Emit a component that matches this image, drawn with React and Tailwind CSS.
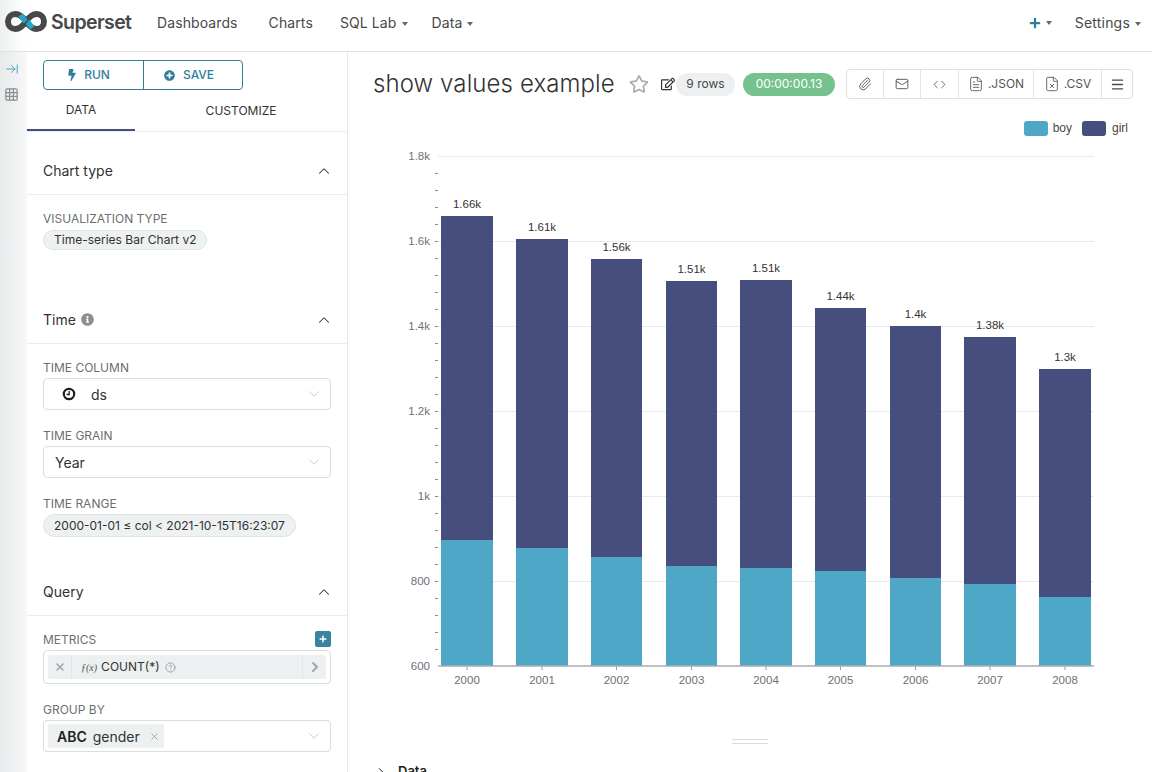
import { ArrowRightToLine, ChevronDown, ChevronRight, ChevronUp, Code, FileText, FileX, Grid3x3, Mail, Menu, Paperclip, X, CircleHelp } from 'lucide-react';
import { FaBolt, FaInfoCircle, FaPlusCircle, FaPlus, FaRegEdit, FaRegStar } from 'react-icons/fa';

const bars = [
  { year: 2000, x: 441, w: 52, top: 216, mid: 540, label: '1.66k' },
  { year: 2001, x: 516, w: 52, top: 239, mid: 548, label: '1.61k' },
  { year: 2002, x: 591, w: 51, top: 259, mid: 557, label: '1.56k' },
  { year: 2003, x: 666, w: 51, top: 281, mid: 566, label: '1.51k' },
  { year: 2004, x: 740, w: 52, top: 280, mid: 568, label: '1.51k' },
  { year: 2005, x: 815, w: 51, top: 308, mid: 571, label: '1.44k' },
  { year: 2006, x: 890, w: 51, top: 326, mid: 578, label: '1.4k' },
  { year: 2007, x: 964, w: 52, top: 337, mid: 584, label: '1.38k' },
  { year: 2008, x: 1039, w: 52, top: 369, mid: 597, label: '1.3k' },
];

const yTicks = [
  { y: 156, label: '1.8k' },
  { y: 241, label: '1.6k' },
  { y: 326, label: '1.4k' },
  { y: 411, label: '1.2k' },
  { y: 496, label: '1k' },
  { y: 581, label: '800' },
];

const minorTicks = [];
for (let y = 173; y < 666; y += 17) minorTicks.push(y);

function Caret() {
  return <span className="ml-[5px] inline-block border-x-[3px] border-t-[4px] border-x-transparent border-t-[#666] align-middle" />;
}

function Logo() {
  return (
    <svg width="42" height="21" viewBox="0 0 42 21" fill="none" className="-mt-[3px]">
      <path d="M21 10.5 C17.5 5.5 14.8 3 10.5 3 C6.3 3 3 6.3 3 10.5 C3 14.7 6.3 18 10.5 18 C14.8 18 17.5 15.5 21 10.5 C24.5 5.5 27.2 3 31.5 3 C35.7 3 39 6.3 39 10.5 C39 14.7 35.7 18 31.5 18 C27.2 18 24.5 15.5 21 10.5 Z" stroke="#484848" strokeWidth="6" />
      <path d="M17.6 2.8 L22.6 8.4 L19 12.6 L13.2 5.4 Z" fill="#20a7c9" />
      <path d="M24.4 8.6 L29.4 15.4 L25 18.4 L20.8 13 Z" fill="#20a7c9" />
    </svg>
  );
}

function SectionHeader({ title, info, className }) {
  return (
    <div className={`flex h-[47px] items-center justify-between border-b border-[#e8eded] pl-4 pr-[14px] ${className}`}>
      <div className="flex items-center gap-[5px] pb-[2px] text-[14px] text-[#323232]">
        {title}
        {info && <FaInfoCircle className="h-[13px] w-[13px] text-[#8a8f8f]" />}
      </div>
      <ChevronUp className="h-[18px] w-[18px] text-[#323232]" strokeWidth={1.4} />
    </div>
  );
}

function FieldLabel({ children, className = '' }) {
  return <div className={`h-[14px] text-[12px] leading-[16px] text-[#6a6f6f] ${className}`}>{children}</div>;
}

function SelectBox({ children, className = '' }) {
  return (
    <div className={`flex h-8 items-center justify-between rounded-[4px] border border-[#d9dddd] pr-[7px] text-[14px] text-[#323232] ${className}`}>
      {children}
      <ChevronDown className="h-[18px] w-[18px] text-[#bfc4c4]" strokeWidth={1.2} />
    </div>
  );
}

function Pill({ children, className = '' }) {
  return (
    <div className={`inline-flex items-center rounded-full border border-[#dfe3e3] bg-[#eef1f1] px-[10px] text-[12px] text-[#323232] ${className}`}>
      {children}
    </div>
  );
}

function ClockIcon() {
  return (
    <svg width="14" height="14" viewBox="0 0 14 14" fill="none">
      <circle cx="7" cy="7" r="5.2" stroke="#1f1f1f" strokeWidth="2.2" />
      <path d="M7.2 4 V7.5 H4.6" stroke="#1f1f1f" strokeWidth="1.3" />
    </svg>
  );
}

function ControlPanel() {
  return (
    <aside className="w-[321px] shrink-0 border-r border-[#e4e8e8] bg-white">
      <div className="px-4 pt-2">
        <div className="flex h-[30px] w-[200px] rounded-[4px] border border-[#2f7f9b] text-[12px] font-medium text-[#2f7f9b]">
          <div className="flex w-[100px] items-center justify-center gap-[7px] border-r border-[#2f7f9b] pr-[10px]">
            <FaBolt className="h-3 w-[10px]" />
            RUN
          </div>
          <div className="flex flex-1 items-center justify-center gap-2 pr-2">
            <FaPlusCircle className="h-[11px] w-[11px]" />
            SAVE
          </div>
        </div>
      </div>

      <div className="flex h-[42px] border-b border-[#e8eded] text-[12px] text-[#323232]">
        <div className="flex w-[108px] items-center justify-center border-b-2 border-[#454e7c] pt-[1px]">DATA</div>
        <div className="flex w-[212px] items-center justify-center pt-[1px]">CUSTOMIZE</div>
      </div>

      <SectionHeader title="Chart type" className="mt-4" />
      <div className="px-4 pt-4">
        <FieldLabel>VISUALIZATION TYPE</FieldLabel>
        <Pill className="mt-[5px] h-5">Time-series Bar Chart v2</Pill>
      </div>

      <SectionHeader title="Time" info className="mt-[47px]" />
      <div className="px-4 pt-4">
        <FieldLabel>TIME COLUMN</FieldLabel>
        <SelectBox className="mt-1">
          <div className="flex items-center gap-[15px] pl-[18px]">
            <ClockIcon />
            <span>ds</span>
          </div>
        </SelectBox>
        <FieldLabel className="mt-[18px]">TIME GRAIN</FieldLabel>
        <SelectBox className="mt-1">
          <span className="pl-[11px]">Year</span>
        </SelectBox>
        <FieldLabel className="mt-[18px]">TIME RANGE</FieldLabel>
        <Pill className="mt-1 h-[23px]">2000-01-01 ≤ col &lt; 2021-10-15T16:23:07</Pill>
      </div>

      <SectionHeader title="Query" className="mt-8" />
      <div className="px-4 pt-4">
        <div className="-mt-px flex items-center justify-between">
          <FieldLabel>METRICS</FieldLabel>
          <div className="flex h-4 w-4 items-center justify-center rounded-[2px] bg-[#3b84a0] text-white">
            <FaPlus className="h-2 w-2" />
          </div>
        </div>
        <div className="mt-[3px] flex h-[34px] items-center rounded-[4px] border border-[#d9dddd] px-1">
          <div className="flex h-6 flex-1 items-center rounded-[2px] bg-[#edf0f0] text-[12px] text-[#323232]">
            <div className="flex h-full w-6 items-center justify-center border-r border-[#e2e5e5]">
              <X className="h-3 w-3 text-[#a0a5a5]" strokeWidth={3} />
            </div>
            <div className="flex flex-1 items-center pl-[9px]">
              <span className="mr-[4px] font-['Liberation_Serif',serif] text-[10px] italic text-[#555]">ƒ(x)</span>
              COUNT(*)
              <CircleHelp className="ml-[5px] h-[11px] w-[11px] text-[#9a9f9f]" />
            </div>
            <div className="flex h-full w-6 items-center justify-center border-l border-[#e2e5e5]">
              <ChevronRight className="h-4 w-4 text-[#a0a5a5]" strokeWidth={3} />
            </div>
          </div>
        </div>
        <FieldLabel className="mt-[18px]">GROUP BY</FieldLabel>
        <SelectBox className="mt-1 pl-1">
          <div className="flex h-6 items-center rounded-[2px] bg-[#edf0f0] pl-[9px] pr-[4px]">
            <span className="text-[14px] font-semibold text-[#1f1f1f]">ABC</span>
            <span className="ml-[6px] text-[14px]">gender</span>
            <X className="ml-[9px] h-[11px] w-[11px] text-[#8a8f8f]" strokeWidth={1.5} />
          </div>
        </SelectBox>
      </div>
    </aside>
  );
}

function ChartActions() {
  const cell = 'flex h-full items-center justify-center gap-1 border-r border-[#e0e4e4] text-[12px] text-[#555]';
  return (
    <div className="ml-[11px] flex h-[30px] w-[287px] rounded-[4px] border border-[#dde1e1]">
      <div className={`${cell} w-[37px]`}><Paperclip className="h-[14px] w-[14px]" strokeWidth={1.6} /></div>
      <div className={`${cell} w-[37px]`}><Mail className="h-[14px] w-[14px]" strokeWidth={1.6} /></div>
      <div className={`${cell} w-[38px]`}><Code className="h-[13px] w-[13px]" strokeWidth={1.6} /></div>
      <div className={`${cell} w-[75px]`}><FileText className="h-4 w-4" strokeWidth={1.3} />.JSON</div>
      <div className={`${cell} w-[68px]`}><FileX className="h-4 w-4" strokeWidth={1.3} />.CSV</div>
      <div className="flex flex-1 items-center justify-center text-[#484848]"><Menu className="h-[15px] w-[15px]" strokeWidth={2.2} /></div>
    </div>
  );
}

function BarChart() {
  return (
    <svg width="804" height="560" viewBox="348 140 804 560" className="block font-['Liberation_Sans',sans-serif]">
      {yTicks.map((t) => (
        <g key={t.y}>
          <line x1="438" x2="1094" y1={t.y + 0.5} y2={t.y + 0.5} stroke="#e6e8f3" />
          <text x="430" y={t.y + 4} textAnchor="end" fontSize="11.5" fill="#6e7076">{t.label}</text>
        </g>
      ))}
      {minorTicks.map((y) => (
        <line key={y} x1="435" x2="438" y1={y + 0.5} y2={y + 0.5} stroke="#888" />
      ))}
      {bars.map((b) => (
        <g key={b.year}>
          <rect x={b.x} y={b.top} width={b.w} height={b.mid - b.top} fill="#454e7c" />
          <rect x={b.x} y={b.mid} width={b.w} height={666 - b.mid} fill="#4fa7c7" />
          <text x={b.x + b.w / 2} y={b.top - 8} textAnchor="middle" fontSize="11.5" fill="#333">{b.label}</text>
          <line x1={b.x + b.w / 2} x2={b.x + b.w / 2} y1="666" y2="670" stroke="#999" />
          <text x={b.x + b.w / 2} y="684" textAnchor="middle" fontSize="11.5" fill="#6e7076">{b.year}</text>
        </g>
      ))}
      <text x="430" y="670" textAnchor="end" fontSize="11.5" fill="#6e7076">600</text>
      <line x1="438" x2="1094" y1="666" y2="666" stroke="#a9abb0" strokeWidth="1.5" />
    </svg>
  );
}

export default function App() {
  return (
    <div className="flex h-[772px] w-[1152px] flex-col overflow-hidden bg-white font-['Inter',sans-serif]">
      <nav className="flex h-[52px] shrink-0 items-center border-b border-[#e0e3e3] bg-[linear-gradient(to_right,#eef1f1,#ffffff_27px)] pb-[6px] text-[14px] text-[#484848]">
        <div className="ml-[5px] flex w-[152px] items-center gap-1">
          <Logo />
          <span className="text-[19.5px] font-semibold tracking-[-0.6px] text-[#484848]">Superset</span>
        </div>
        <span className="tracking-[0.1px]">Dashboards</span>
        <span className="ml-[31px] tracking-[0.1px]">Charts</span>
        <span className="ml-[27px] tracking-[0.1px]">SQL Lab<Caret /></span>
        <span className="ml-[24px] tracking-[0.1px]">Data<Caret /></span>
        <div className="ml-auto flex items-center pr-[11px]">
          <FaPlus className="h-3 w-3 text-[#2f7f9b]" />
          <Caret />
          <span className="ml-[23px] tracking-[0.2px]">Settings<Caret /></span>
        </div>
      </nav>

      <div className="flex min-h-0 flex-1">
        <div className="flex w-[27px] shrink-0 flex-col items-center gap-[11px] bg-gradient-to-r from-[#e8ebeb] to-[#f6f8f8] pr-[4px] pt-[10px]">
          <ArrowRightToLine className="h-[14px] w-[14px] text-[#3b9dbb]" strokeWidth={1.6} />
          <Grid3x3 className="h-[15px] w-[15px] text-[#8a8f8f]" strokeWidth={2} />
        </div>

        <ControlPanel />

        <main className="min-w-0 flex-1">
          <div className="flex items-center pl-[25px] pt-[17px]">
            <h1 className="w-[256px] text-[24px] font-light leading-[30px] tracking-[0.1px] text-[#323232]">show values example</h1>
            <FaRegStar className="h-[20px] w-[20px] text-[#a8adad]" />
            <FaRegEdit className="ml-[12px] h-[14px] w-[14px] text-[#323232]" />
            <div className="ml-[1px] flex h-[23px] w-[59px] items-center justify-center rounded-full bg-[#edf0f0] text-[12px] text-[#484848]">9 rows</div>
            <div className="ml-2 flex h-[23px] w-[92px] items-center justify-center rounded-full bg-[#75c28e] text-[12px] text-white">00:00:00.13</div>
            <ChartActions />
          </div>
          <div className="flex h-[37px] items-end justify-end gap-[10px] pr-[24px] font-['Liberation_Sans',sans-serif] text-[12px] text-[#484848]">
            <div className="relative top-px flex items-center gap-[5px]">
              <span className="h-[15px] w-6 rounded-[3px] bg-[#4fa7c7]" />boy
            </div>
            <div className="relative top-px flex items-center gap-[6px]">
              <span className="h-[15px] w-6 rounded-[3px] bg-[#454e7c]" />girl
            </div>
          </div>
          <div className="mt-[4px]">
            <BarChart />
          </div>
          <div className="mx-auto mt-[39px] h-[5px] w-9 border-y border-[#dcdcdc]" />
          <div className="mt-[18px] flex items-center gap-[10px] pl-[26px] text-[13px] font-semibold text-[#1f1f1f]">
            <ChevronRight className="h-[14px] w-[14px]" strokeWidth={1.6} />
            Data
          </div>
        </main>
      </div>
    </div>
  );
}
